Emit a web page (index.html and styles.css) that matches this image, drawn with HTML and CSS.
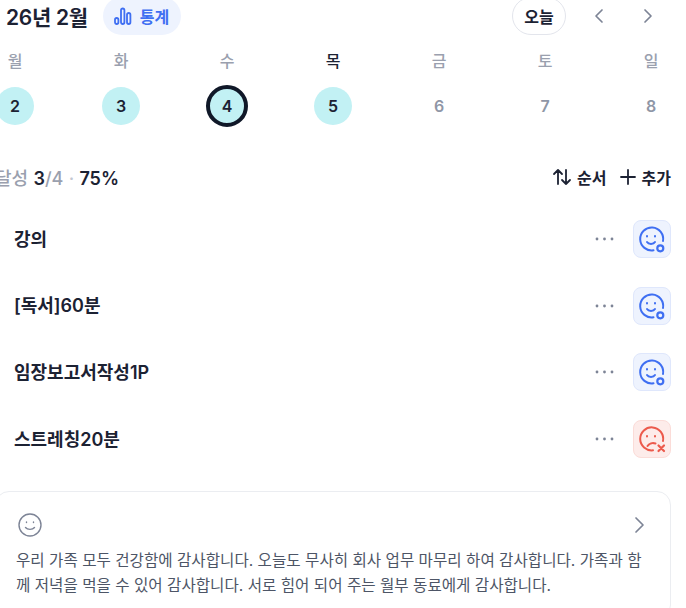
FILE: index.html
```html
<!DOCTYPE html>
<html lang="ko">
<head>
    <meta charset="UTF-8">
    <title>습관</title>
    <link rel="stylesheet" href="styles.css">
</head>
<body>
    <div class="container">
        <header class="top-bar">
            <div class="top-left">
                <h1>26년 2월</h1>
                <button class="stats-button">
                    <svg width="18" height="18" viewBox="0 0 18 18" fill="none" stroke="#3f6ff2" stroke-width="1.8">
                        <rect x="1" y="11" width="3.4" height="6" rx="1.700"/>
                        <rect x="7" y="1.500" width="3.4" height="15.500" rx="1.700"/>
                        <rect x="13" y="6" width="3.4" height="11" rx="1.700"/>
                    </svg>
                    통계
                </button>
            </div>
            <div class="top-right">
                <button class="today-button">오늘</button>
                <button class="nav-button">
                    <svg width="12" height="16" viewBox="0 0 12 16" fill="none" stroke="#7d8496" stroke-width="1.7" stroke-linecap="round" stroke-linejoin="round"><path d="M9 2 3 8l6 6"/></svg>
                </button>
                <button class="nav-button">
                    <svg width="12" height="16" viewBox="0 0 12 16" fill="none" stroke="#7d8496" stroke-width="1.7" stroke-linecap="round" stroke-linejoin="round"><path d="m3 2 6 6-6 6"/></svg>
                </button>
            </div>
        </header>

        <div class="week">
            <div class="day"><span class="day-name">월</span><span class="day-num done">2</span></div>
            <div class="day"><span class="day-name">화</span><span class="day-num done">3</span></div>
            <div class="day"><span class="day-name">수</span><span class="day-num done selected">4</span></div>
            <div class="day"><span class="day-name current">목</span><span class="day-num done">5</span></div>
            <div class="day"><span class="day-name">금</span><span class="day-num">6</span></div>
            <div class="day"><span class="day-name">토</span><span class="day-num">7</span></div>
            <div class="day"><span class="day-name">일</span><span class="day-num">8</span></div>
        </div>

        <div class="summary">
            <p class="rate">달성 <b>3</b>/4 <span class="dot">·</span> <b>75%</b></p>
            <div class="actions">
                <span class="action">
                    <svg width="20" height="18" viewBox="0 0 20 18" fill="none" stroke="#1c2233" stroke-width="1.8" stroke-linecap="round" stroke-linejoin="round"><path d="M6 16V2M2 6l4-4 4 4M14 2v14M10 12l4 4 4-4"/></svg>
                    순서
                </span>
                <span class="action">
                    <svg width="18" height="18" viewBox="0 0 18 18" fill="none" stroke="#1c2233" stroke-width="1.8" stroke-linecap="round"><path d="M9 2v14M2 9h14"/></svg>
                    추가
                </span>
            </div>
        </div>

        <ul class="habit-list">
            <li class="habit">
                <span class="habit-name">강의</span>
                <svg class="more" width="20" height="4" viewBox="0 0 20 4" fill="#7d8496"><circle cx="2" cy="2" r="1.4"/><circle cx="9.500" cy="2" r="1.4"/><circle cx="17" cy="2" r="1.4"/></svg>
                <span class="status good">
                    <svg width="28" height="28" viewBox="0 0 28 28" fill="none" stroke="#3f6ff2" stroke-width="2" stroke-linecap="round"><path d="M15.500 25.300A11.500 11.500 0 1 1 25 16"/><path d="M9 17c1.500 2.500 6.500 2.500 8 0"/><path d="M9 11v.4M17 11v.4"/><circle cx="22.300" cy="23.300" r="3" stroke-width="2.200"/></svg>
                </span>
            </li>
            <li class="habit">
                <span class="habit-name">[독서]60분</span>
                <svg class="more" width="20" height="4" viewBox="0 0 20 4" fill="#7d8496"><circle cx="2" cy="2" r="1.4"/><circle cx="9.500" cy="2" r="1.4"/><circle cx="17" cy="2" r="1.4"/></svg>
                <span class="status good">
                    <svg width="28" height="28" viewBox="0 0 28 28" fill="none" stroke="#3f6ff2" stroke-width="2" stroke-linecap="round"><path d="M15.500 25.300A11.500 11.500 0 1 1 25 16"/><path d="M9 17c1.500 2.500 6.500 2.500 8 0"/><path d="M9 11v.4M17 11v.4"/><circle cx="22.300" cy="23.300" r="3" stroke-width="2.200"/></svg>
                </span>
            </li>
            <li class="habit">
                <span class="habit-name">임장보고서작성1P</span>
                <svg class="more" width="20" height="4" viewBox="0 0 20 4" fill="#7d8496"><circle cx="2" cy="2" r="1.4"/><circle cx="9.500" cy="2" r="1.4"/><circle cx="17" cy="2" r="1.4"/></svg>
                <span class="status good">
                    <svg width="28" height="28" viewBox="0 0 28 28" fill="none" stroke="#3f6ff2" stroke-width="2" stroke-linecap="round"><path d="M15.500 25.300A11.500 11.500 0 1 1 25 16"/><path d="M9 17c1.500 2.500 6.500 2.500 8 0"/><path d="M9 11v.4M17 11v.4"/><circle cx="22.300" cy="23.300" r="3" stroke-width="2.200"/></svg>
                </span>
            </li>
            <li class="habit">
                <span class="habit-name">스트레칭20분</span>
                <svg class="more" width="20" height="4" viewBox="0 0 20 4" fill="#7d8496"><circle cx="2" cy="2" r="1.4"/><circle cx="9.500" cy="2" r="1.4"/><circle cx="17" cy="2" r="1.4"/></svg>
                <span class="status bad">
                    <svg width="28" height="28" viewBox="0 0 28 28" fill="none" stroke="#ec5a4c" stroke-width="2" stroke-linecap="round"><path d="M15 25.300A11.500 11.500 0 1 1 25 16"/><path d="M9.500 21c1.500-2.500 5-3.500 8-2.500"/><path d="M9 11v.4M17 11v.4"/><path d="m20.500 20.500 5.500 5.500M26 20.500 20.500 26" stroke-width="2.200"/></svg>
                </span>
            </li>
        </ul>

        <section class="note">
            <div class="note-head">
                <svg width="26" height="26" viewBox="0 0 26 26" fill="none" stroke="#7d8496" stroke-width="1.4" stroke-linecap="round"><circle cx="13" cy="13" r="11"/><path d="M8.500 15.500c2 2.500 7 2.500 9 0"/><path d="M9.500 10v.5M16.500 10v.5"/></svg>
                <svg width="12" height="18" viewBox="0 0 12 18" fill="none" stroke="#7d8496" stroke-width="1.7" stroke-linecap="round" stroke-linejoin="round"><path d="m3 2 7 7-7 7"/></svg>
            </div>
            <p>우리 가족 모두 건강함에 감사합니다. 오늘도 무사히 회사 업무 마무리 하여 감사합니다. 가족과 함께 저녁을 먹을 수 있어 감사합니다. 서로 힘어 되어 주는 월부 동료에게 감사합니다.</p>
        </section>
    </div>
</body>
</html>
```

FILE: styles.css
```css
body, html {
    margin: 0;
    padding: 0;
    height: 100%;
    overflow: hidden;
    background-color: #fff;
    font-family: Inter, "Noto Sans CJK KR", sans-serif;
    color: #1c2233;
}

button {
    font-family: inherit;
    border: none;
    background: none;
    padding: 0;
}

.container {
    width: 676px;
    margin: -3px 0 0 -5px;
}

.top-bar {
    display: flex;
    align-items: center;
    justify-content: space-between;
    height: 38px;
    padding-left: 11px;
}

.top-left, .top-right {
    display: flex;
    align-items: center;
}

h1 {
    margin: 0;
    font-size: 21px;
    font-weight: 600;
    letter-spacing: -0.3px;
    color: #1c2233;
}

.stats-button {
    display: flex;
    align-items: center;
    gap: 8px;
    height: 38px;
    margin-left: 15px;
    padding: 0 12px 0 11px;
    border-radius: 19px;
    background-color: #eef3fe;
    color: #3f6ff2;
    font-size: 16px;
    font-weight: 600;
}

.today-button {
    width: 54px;
    height: 38px;
    border: 1px solid #e3e5ec;
    border-radius: 19px;
    background-color: #fff;
    color: #1c2233;
    font-size: 16px;
    font-weight: 600;
}

.nav-button {
    display: flex;
    align-items: center;
    justify-content: center;
    width: 12px;
    height: 38px;
    margin-left: 27px;
}

.nav-button + .nav-button {
    margin-left: 37px;
    margin-right: 17px;
}

.week {
    display: flex;
    justify-content: space-between;
    margin-top: 14px;
}

.day {
    display: flex;
    flex-direction: column;
    align-items: center;
    width: 40px;
}

.day-name {
    height: 38px;
    line-height: 24px;
    font-size: 16px;
    font-weight: 500;
    color: #9aa0ae;
}

.day-name.current {
    color: #1c2233;
}

.day-num {
    display: flex;
    align-items: center;
    justify-content: center;
    width: 38px;
    height: 38px;
    border-radius: 50%;
    font-size: 16px;
    font-weight: 600;
    color: #8f96a6;
}

.day-num.done {
    background-color: #c2f1f4;
    color: #1c2233;
}

.day-num.selected {
    box-sizing: border-box;
    width: 42px;
    height: 42px;
    margin: -2px 0;
    border: 4px solid #101828;
}

.summary {
    display: flex;
    align-items: center;
    justify-content: space-between;
    margin-top: 40px;
    height: 24px;
}

.rate {
    margin: 0;
    font-size: 18px;
    font-weight: 500;
    word-spacing: 0.5px;
    color: #9aa0ae;
}

.rate b {
    font-weight: 600;
    color: #1c2233;
}

.rate .dot {
    color: #c3c7d1;
}

.actions {
    display: flex;
    gap: 12px;
}

.action {
    display: flex;
    align-items: center;
    gap: 5px;
    font-size: 16px;
    font-weight: 600;
}

.habit-list {
    list-style: none;
    margin: 17px 0 0;
    padding: 0;
}

.habit {
    display: flex;
    align-items: center;
    height: 66.6px;
    padding-left: 19px;
}

.habit-name {
    flex: 1;
    margin-top: -3px;
    font-size: 18px;
    font-weight: 600;
}

.more {
    margin-right: 18px;
}

.status {
    box-sizing: border-box;
    display: flex;
    align-items: center;
    justify-content: center;
    width: 38px;
    height: 38px;
    border-radius: 8px;
}

.status.good {
    background-color: #eef3fe;
    border: 1px solid #dfe7fc;
}

.status.bad {
    background-color: #fdecea;
    border: 1px solid #fbdcd8;
}

.note {
    margin-top: 19px;
    padding: 20px 21px;
    border: 1px solid #ebedf1;
    border-radius: 14px;
}

.note-head {
    display: flex;
    align-items: center;
    justify-content: space-between;
    padding-right: 4px;
}

.note p {
    margin: 10px 0 0 -1px;
    font-size: 15.6px;
    line-height: 25px;
    color: #4d5566;
}
```
